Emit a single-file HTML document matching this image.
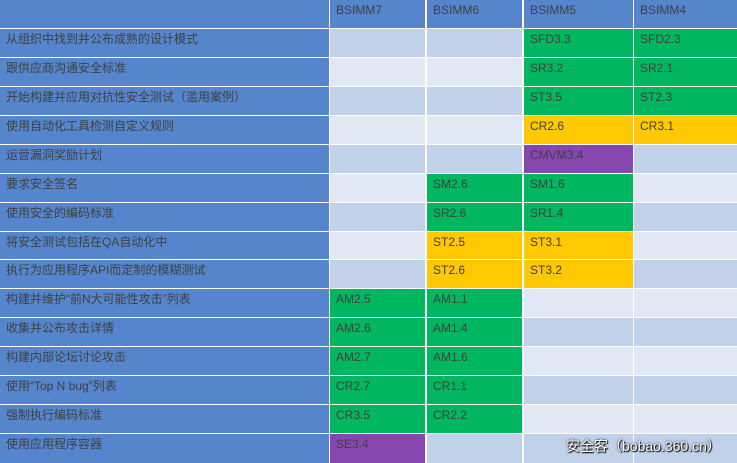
<!DOCTYPE html>
<html><head><meta charset="utf-8"><style>
html,body{margin:0;padding:0;background:#fff;width:737px;height:463px;overflow:hidden;position:relative}
.r{position:absolute;left:0;width:737px;height:28px}
.c{position:absolute;top:0;height:100%;box-sizing:border-box;padding:2px 0 0 6px;font:12px "Liberation Sans","Noto Sans CJK SC",sans-serif;color:#404040;line-height:16px;white-space:nowrap;overflow:hidden}
.c0{left:0;width:329px}.c1{left:330px;width:95px}.c2{left:427px;width:95px}.c3{left:524px;width:109px}.c4{left:634px;width:103px}
.b{background:#5585CC}.d{background:#C1D1EA}.l{background:#E1E8F4}.g{background:#00B65E}.y{background:#FFC800}.p{background:#8646B0}
.wm{position:absolute;left:566px;top:436px;font:14px "Liberation Sans","Noto Sans CJK SC",sans-serif;color:#fff;text-shadow:0 0 2px #000,1px 1px 1px #000;white-space:nowrap}
</style></head><body>
<div class="r" style="top:0"><div class="c c0 b"></div><div class="c c1 b">BSIMM7</div><div class="c c2 b">BSIMM6</div><div class="c c3 b">BSIMM5</div><div class="c c4 b">BSIMM4</div></div>
<div class="r" style="top:29px"><div class="c c0 b">从组织中找到并公布成熟的设计模式</div><div class="c c1 d"></div><div class="c c2 d"></div><div class="c c3 g">SFD3.3</div><div class="c c4 g">SFD2.3</div></div>
<div class="r" style="top:58px"><div class="c c0 b">跟供应商沟通安全标准</div><div class="c c1 l"></div><div class="c c2 l"></div><div class="c c3 g">SR3.2</div><div class="c c4 g">SR2.1</div></div>
<div class="r" style="top:87px"><div class="c c0 b">开始构建并应用对抗性安全测试（滥用案例）</div><div class="c c1 d"></div><div class="c c2 d"></div><div class="c c3 g">ST3.5</div><div class="c c4 g">ST2.3</div></div>
<div class="r" style="top:116px"><div class="c c0 b">使用自动化工具检测自定义规则</div><div class="c c1 l"></div><div class="c c2 l"></div><div class="c c3 y">CR2.6</div><div class="c c4 y">CR3.1</div></div>
<div class="r" style="top:145px"><div class="c c0 b">运营漏洞奖励计划</div><div class="c c1 d"></div><div class="c c2 d"></div><div class="c c3 p">CMVM3.4</div><div class="c c4 d"></div></div>
<div class="r" style="top:174px"><div class="c c0 b">要求安全签名</div><div class="c c1 l"></div><div class="c c2 g">SM2.6</div><div class="c c3 g">SM1.6</div><div class="c c4 l"></div></div>
<div class="r" style="top:203px"><div class="c c0 b">使用安全的编码标准</div><div class="c c1 d"></div><div class="c c2 g">SR2.6</div><div class="c c3 g">SR1.4</div><div class="c c4 d"></div></div>
<div class="r" style="top:232px;height:27px"><div class="c c0 b">将安全测试包括在QA自动化中</div><div class="c c1 l"></div><div class="c c2 y">ST2.5</div><div class="c c3 y">ST3.1</div><div class="c c4 l"></div></div>
<div class="r" style="top:260px"><div class="c c0 b">执行为应用程序API而定制的模糊测试</div><div class="c c1 d"></div><div class="c c2 y">ST2.6</div><div class="c c3 y">ST3.2</div><div class="c c4 d"></div></div>
<div class="r" style="top:289px"><div class="c c0 b">构建并维护“前N大可能性攻击”列表</div><div class="c c1 g">AM2.5</div><div class="c c2 g">AM1.1</div><div class="c c3 l"></div><div class="c c4 l"></div></div>
<div class="r" style="top:318px"><div class="c c0 b">收集并公布攻击详情</div><div class="c c1 g">AM2.6</div><div class="c c2 g">AM1.4</div><div class="c c3 d"></div><div class="c c4 d"></div></div>
<div class="r" style="top:347px"><div class="c c0 b">构建内部论坛讨论攻击</div><div class="c c1 g">AM2.7</div><div class="c c2 g">AM1.6</div><div class="c c3 l"></div><div class="c c4 l"></div></div>
<div class="r" style="top:376px"><div class="c c0 b">使用“Top N bug”列表</div><div class="c c1 g">CR2.7</div><div class="c c2 g">CR1.1</div><div class="c c3 d"></div><div class="c c4 d"></div></div>
<div class="r" style="top:405px"><div class="c c0 b">强制执行编码标准</div><div class="c c1 g">CR3.5</div><div class="c c2 g">CR2.2</div><div class="c c3 l"></div><div class="c c4 l"></div></div>
<div class="r" style="top:434px;height:29px"><div class="c c0 b">使用应用程序容器</div><div class="c c1 p">SE3.4</div><div class="c c2 d"></div><div class="c c3 d"></div><div class="c c4 d"></div></div>
<div class="wm">安全客（bobao.360.cn）</div>
</body></html>
